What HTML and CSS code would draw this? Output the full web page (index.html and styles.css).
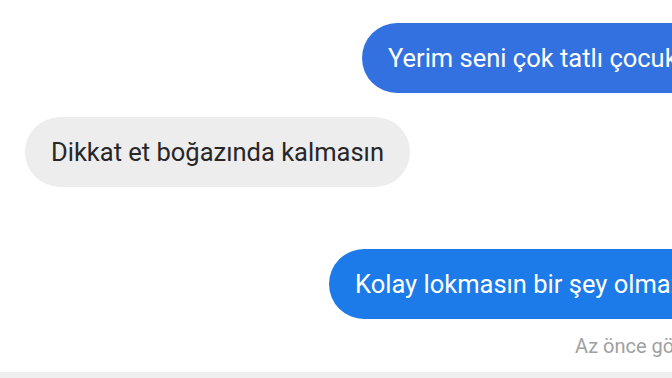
FILE: index.html
```html
<!DOCTYPE html>
<html lang="tr">
<head>
  <meta charset="UTF-8">
  <meta name="viewport" content="width=device-width, initial-scale=1.0">
  <link rel="stylesheet" href="styles.css">
  <title>Mesajlar</title>
</head>
<body>

<div class="chat">
  <div class="row row-sent row-first">
    <div class="bubble bubble-sent">Yerim seni çok tatlı çocuksun</div>
  </div>

  <div class="row row-received">
    <div class="bubble bubble-received">Dikkat et boğazında kalmasın</div>
  </div>

  <div class="row row-sent row-last">
    <div class="bubble bubble-sent bubble-bright">Kolay lokmasın bir şey olmaz</div>
  </div>

  <div class="seen">Az önce görüldü</div>
</div>

<div class="composer"></div>

</body>
</html>
```

FILE: styles.css
```css
body {
  margin: 0;
  font-family: Roboto, "Liberation Sans", sans-serif;
  background-color: #fff;
  overflow: hidden;
  width: 672px;
  height: 378px;
  display: flex;
  flex-direction: column;
}

.chat {
  flex: 1;
  display: flex;
  flex-direction: column;
}

.row {
  display: flex;
  white-space: nowrap;
}

.row-first {
  margin-top: 23px;
  padding-left: 362px;
}

.row-received {
  margin-top: 24px;
  padding-left: 25px;
}

.row-last {
  margin-top: 62px;
  padding-left: 329px;
}

.bubble {
  height: 70px;
  line-height: 70px;
  padding: 0 26px;
  border-radius: 35px;
  font-size: 25.5px;
  flex-shrink: 0;
}

.bubble-sent {
  background-color: #3371e1;
  color: #fff;
  border-top-right-radius: 0;
  border-bottom-right-radius: 0;
  padding-right: 60px;
}

.bubble-bright {
  background-color: #1c7be9;
}

.bubble-received {
  background-color: #ededed;
  color: #272727;
}

.seen {
  margin-top: 15px;
  padding-left: 575px;
  white-space: nowrap;
  font-size: 20px;
  color: #a0a0a0;
}

.composer {
  height: 6px;
  background-color: #efefef;
}
```
